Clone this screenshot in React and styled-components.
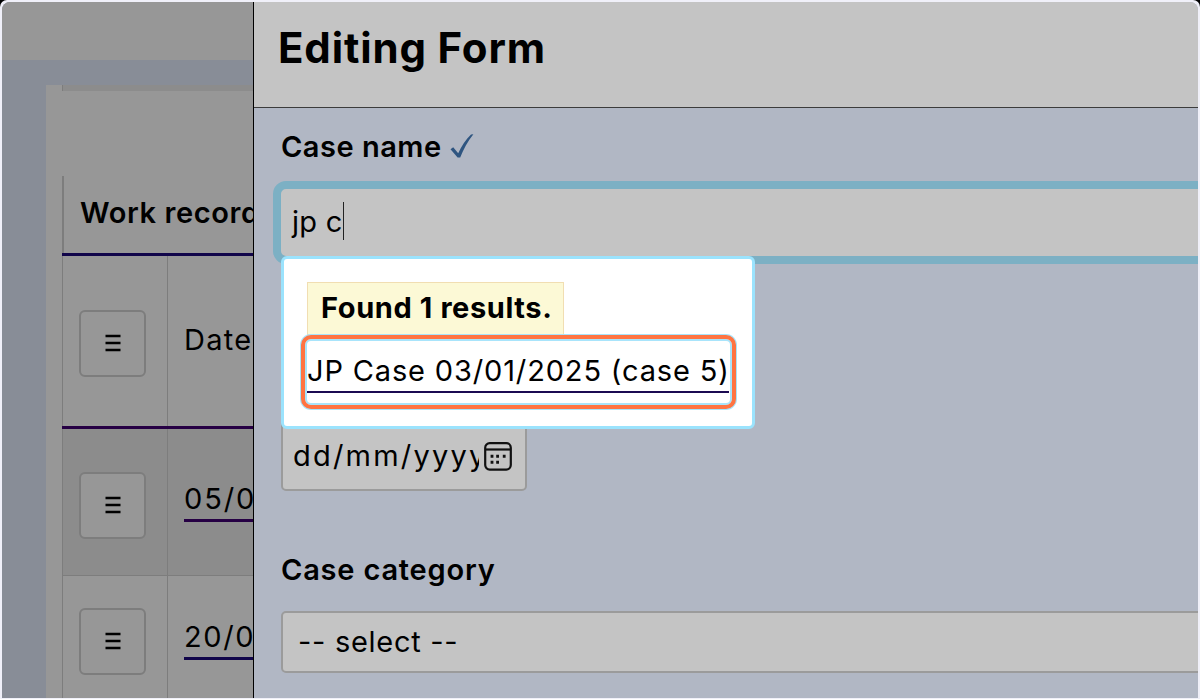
import React from "react";
import styled, { createGlobalStyle } from "styled-components";

const GlobalStyle = createGlobalStyle`
  * { box-sizing: border-box; }
  body { margin: 0; background: #000; font-family: Inter, "Liberation Sans", sans-serif; }
`;

const Frame = styled.div`
  width: 1200px;
  height: 699px;
  padding: 2px 2px 1px;
  background: #f0f0f9;
  border-radius: 7px 7px 0 0;
  overflow: hidden;
`;

const Screen = styled.main`
  display: flex;
  width: 1196px;
  height: 696px;
  border-radius: 8px 8px 0 0;
  overflow: hidden;
  color: #000;
`;

const Backdrop = styled.section`
  width: 251px;
  flex: none;
  display: flex;
  flex-direction: column;
  background: #888d97;
  overflow: hidden;
`;

const TopBar = styled.div`
  height: 58px;
  flex: none;
  background: #979797;
`;

const Card = styled.div`
  flex: 1;
  margin: 25px 0 0 44px;
  padding-left: 16px;
  background: #979797;
`;

const TableStub = styled.div`
  height: 6px;
  margin-bottom: 85px;
  border-left: 1px solid #7d7d7d;
  background: #8c8c8c;
`;

const TableTitle = styled.div`
  height: 77px;
  padding: 18px 0 0 16px;
  border-left: 2px solid #7d7d7d;
  font-size: 29px;
  line-height: 38px;
  font-weight: 600;
  letter-spacing: 0.6px;
  white-space: nowrap;
`;

const Row = styled.div`
  display: grid;
  grid-template-columns: 105px 1fr;
  height: ${(p) => p.$height}px;
  border-top: ${(p) => p.$line};
  background: ${(p) => (p.$shaded ? "#8c8c8c" : "#979797")};
`;

const Cell = styled.div`
  border-left: 1px solid #7d7d7d;
  padding: ${(p) => p.$top}px 0 0 16px;
  overflow: hidden;
`;

const MenuButton = styled.button`
  display: flex;
  align-items: center;
  justify-content: center;
  width: 67px;
  height: 67px;
  padding: 0 0 2px;
  border: 2px solid #7d7d7d;
  border-radius: 6px;
  background: #979797;
`;

const CellText = styled.span`
  display: inline-block;
  height: 42px;
  font-size: 29px;
  line-height: 38px;
  letter-spacing: ${(p) => p.$spacing};
  white-space: nowrap;
  border-bottom: ${(p) => (p.$underline ? `3px solid ${p.$underline}` : "none")};
`;

const Panel = styled.section`
  flex: 1;
  min-width: 0;
  display: flex;
  flex-direction: column;
  border-left: 1px solid #000;
  background: #b1b7c4;
`;

const PanelHeader = styled.header`
  height: 106px;
  flex: none;
  padding: 18px 0 0 24px;
  border-bottom: 1px solid #3c3c3c;
  background: #c4c4c4;
`;

const Title = styled.h1`
  margin: 0;
  font-size: 42px;
  line-height: 56px;
  font-weight: 700;
  letter-spacing: 0.85px;
`;

const Form = styled.form`
  position: relative;
  display: flex;
  flex-direction: column;
  padding: 19px 0 0 27px;
  overflow: hidden;
`;

const Label = styled.label`
  display: flex;
  align-items: center;
  gap: 8px;
  height: 38px;
  font-size: 29px;
  font-weight: 600;
  letter-spacing: 0.5px;
`;

const CategoryLabel = styled(Label)`
  margin-top: 59px;
  letter-spacing: 0.8px;
`;

const SearchField = styled.div`
  display: flex;
  align-items: center;
  height: 83px;
  margin: 16px -20px 0 -8px;
  padding: 0 0 3px 11px;
  border: 8px solid #7cb0c4;
  border-radius: 13px;
  background: #c4c4c4;
  font-size: 29px;
  letter-spacing: 0.3px;
`;

const Caret = styled.span`
  width: 1px;
  height: 38px;
  background: #222;
`;

const DateField = styled.div`
  display: flex;
  align-items: flex-end;
  width: 246px;
  height: 90px;
  margin-top: 137px;
  padding: 0 13px 14px 10px;
  border: 2px solid #9b9b9b;
  border-radius: 5px;
  background: #c4c4c4;
`;

const DateText = styled.span`
  width: 186px;
  margin-right: 5px;
  overflow: hidden;
  font-size: 29px;
  line-height: 38px;
  letter-spacing: 2.2px;
  white-space: nowrap;
`;

const Select = styled.div`
  display: flex;
  align-items: center;
  height: 62px;
  margin: 23px -20px 0 0;
  padding: 0 0 2px 15px;
  border: 2px solid #9b9b9b;
  border-radius: 5px;
  background: #c4c4c4;
  font-size: 29px;
  letter-spacing: 0.7px;
`;

const Popup = styled.div`
  position: absolute;
  left: 27px;
  top: 148px;
  width: 474px;
  height: 173px;
  padding: 23px 0 0 17px;
  border: 3px solid #9be3fd;
  border-radius: 6px;
  background: #fff;
`;

const ResultCount = styled.div`
  width: 257px;
  height: 53px;
  margin-left: 6px;
  padding-left: 13px;
  border: 1px solid #f1deb2;
  background: #fcf9d6;
  font-size: 29px;
  line-height: 49px;
  font-weight: 700;
  letter-spacing: 0.6px;
  white-space: nowrap;
`;

const ResultOutline = styled.div`
  position: relative;
  width: 435px;
  height: 74px;
  padding-left: 2px;
  border: 4px solid #ff7442;
  border-radius: 10px;
  background: #fff;
  box-shadow: 0 0 0 1px #a8e4fb, inset 0 0 0 2px #a8e4fb;
`;

const ResultLink = styled.a`
  display: block;
  position: relative;
  width: 422px;
  height: 54px;
  padding-top: 13px;
  border-bottom: 2px solid #1b0a52;
  font-size: 29px;
  line-height: 38px;
  letter-spacing: 0.85px;
  white-space: nowrap;
`;

const BarsIcon = styled.svg`
  width: 16px;
  height: 18px;
  stroke: #000;
  stroke-width: 2.6;
`;

const Bars = () => (
  <BarsIcon viewBox="0 0 16 18">
    <path d="M.5 2h15M.5 9h15M.5 16h15" />
  </BarsIcon>
);

const Check = () => (
  <svg width="24" height="26" viewBox="0 0 24 26" fill="#2f5580">
    <path d="M0.5 16.2 3.2 14.2 8.2 20.2C11.5 13.4 15.8 6.2 21 1.5L23.4 1.2C17.6 8.4 13.4 16.5 10.2 24.5H7.6Z" />
  </svg>
);

const CalendarIcon = styled.svg`
  width: 28px;
  height: 29px;
  margin-bottom: 4px;
  flex: none;
  fill: none;
  stroke: #111;
  stroke-width: 2.2;
`;

const Calendar = () => (
  <CalendarIcon viewBox="0 0 28 29">
    <rect x="1.2" y="1.2" width="25.6" height="26.4" rx="4.5" />
    <path d="M1.2 7.5h25.6" />
    <path
      strokeWidth="2.9"
      d="M6.6 14.3h2.8M12.2 14.3h2.8M18.8 14.3h2.8M6.6 20.2h2.8M12.2 20.2h2.8"
    />
  </CalendarIcon>
);

export default function App() {
  return (
    <>
      <GlobalStyle />
      <Frame>
        <Screen>
          <Backdrop>
            <TopBar />
            <Card>
              <TableStub />
              <TableTitle>Work records</TableTitle>
              <Row $height={173} $line="3px solid #11054a">
                <Cell $top={54}><MenuButton type="button"><Bars /></MenuButton></Cell>
                <Cell $top={65}><CellText $spacing="1.3px">Date</CellText></Cell>
              </Row>
              <Row $height={149} $shaded $line="3px solid #260044">
                <Cell $top={43}><MenuButton type="button"><Bars /></MenuButton></Cell>
                <Cell $top={51}><CellText $spacing="1.9px" $underline="#260044">05/01/2025</CellText></Cell>
              </Row>
              <Row $height={123} $line="1px solid #7d7d7d">
                <Cell $top={32}><MenuButton type="button"><Bars /></MenuButton></Cell>
                <Cell $top={42}><CellText $spacing="1.6px" $underline="#11054a">20/01/2025</CellText></Cell>
              </Row>
            </Card>
          </Backdrop>
          <Panel>
            <PanelHeader>
              <Title>Editing Form</Title>
            </PanelHeader>
            <Form>
              <Label>Case name <Check /></Label>
              <SearchField>jp c<Caret /></SearchField>
              <DateField>
                <DateText>dd/mm/yyyy</DateText>
                <Calendar />
              </DateField>
              <CategoryLabel>Case category</CategoryLabel>
              <Select>-- select --</Select>
              <Popup>
                <ResultCount>Found 1 results.</ResultCount>
                <ResultOutline>
                  <ResultLink>JP Case 03/01/2025 (case 5)</ResultLink>
                </ResultOutline>
              </Popup>
            </Form>
          </Panel>
        </Screen>
      </Frame>
    </>
  );
}
